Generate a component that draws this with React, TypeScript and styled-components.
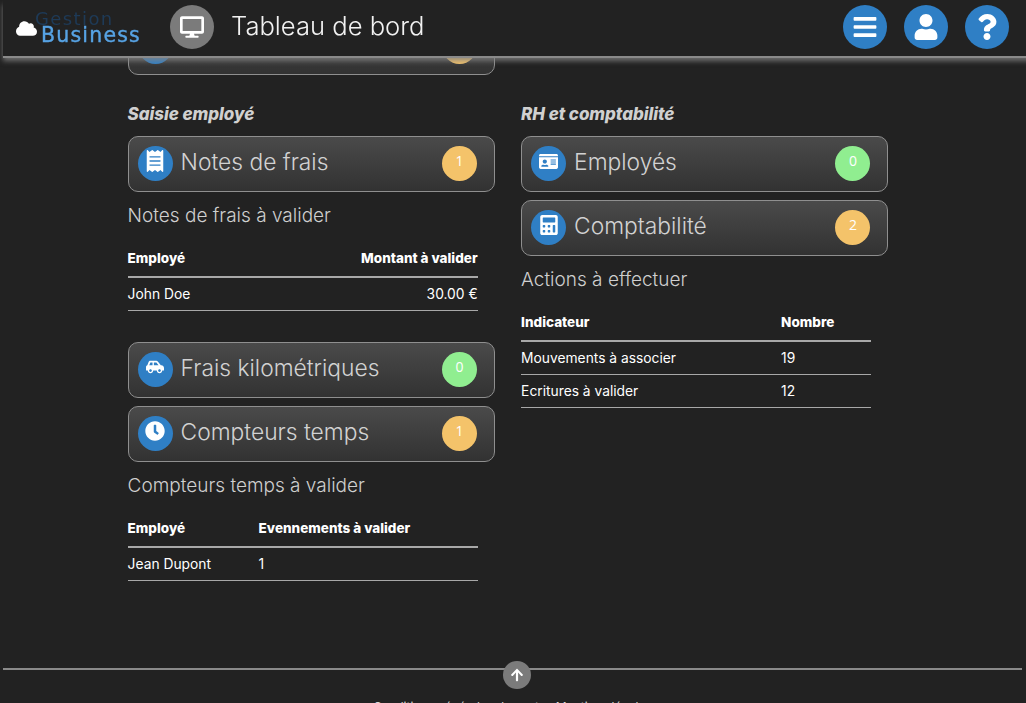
import styled, { createGlobalStyle } from "styled-components";
import {
  FaArrowUp,
  FaBars,
  FaCalculator,
  FaCarSide,
  FaClock,
  FaCloud,
  FaDesktop,
  FaIdCard,
  FaQuestion,
  FaReceipt,
  FaUser,
} from "react-icons/fa";
import type { ReactNode } from "react";

const font = `Inter, "Liberation Sans", sans-serif`;

const GlobalStyle = createGlobalStyle`
  html, body {
    margin: 0;
    height: 100%;
    background: #222222;
    overflow: hidden;
  }
  body {
    font-family: ${font};
    color: #fff;
  }
`;

const Page = styled.div`
  height: 703px;
  overflow: hidden;
`;

const Header = styled.header`
  position: fixed;
  top: 0;
  left: 3px;
  right: -10px;
  height: 56px;
  box-sizing: border-box;
  background: #222222;
  box-shadow: 0 2px 0 #8a8a8a, 0 5px 5px 0 rgba(130, 130, 130, 0.8);
  display: flex;
  align-items: center;
  padding: 0 27px 2px 13px;
  z-index: 10;
`;

const Logo = styled.div`
  width: 141px;
  height: 34px;
  position: relative;
  flex: none;
  svg {
    position: absolute;
    left: 0;
    top: 8px;
    color: #fff;
    font-size: 21px;
  }
`;

const LogoGestion = styled.span`
  position: absolute;
  left: 19px;
  top: 1px;
  font-family: "DejaVu Sans", sans-serif;
  font-size: 18px;
  line-height: 15px;
  letter-spacing: 1.4px;
  color: #1e3a57;
`;

const LogoBusiness = styled.span`
  position: absolute;
  left: 25px;
  top: 17px;
  font-family: "DejaVu Sans", sans-serif;
  font-size: 20.5px;
  line-height: 17px;
  letter-spacing: 1.2px;
  color: #57a3e4;
  -webkit-text-stroke: 0.4px #57a3e4;
`;

const PageIcon = styled.div`
  width: 44px;
  height: 44px;
  border-radius: 50%;
  background: #7b7b7b;
  margin-left: 13px;
  display: flex;
  align-items: center;
  justify-content: center;
  font-size: 24px;
  color: #fff;
  flex: none;
`;

const PageTitle = styled.h1`
  margin: 0 0 4px 17px;
  font-size: 25.6px;
  font-weight: 300;
  color: #f2f2f2;
  flex: 1;
`;

const HeaderButton = styled.div`
  width: 44px;
  height: 44px;
  border-radius: 50%;
  background: #2f7fc5;
  margin-left: 17px;
  display: flex;
  align-items: center;
  justify-content: center;
  font-size: 26px;
  color: #fff;
  flex: none;
`;

const Main = styled.main`
  padding: 19px 0 0 127.6px;
  height: 650px;
  box-sizing: border-box;
  display: grid;
  grid-template-columns: 393.5px 393.5px;
  grid-template-rows: auto 1fr;
  align-content: start;
`;

const FirstCardSlot = styled.div`
  grid-column: 1 / 3;
  width: 367.3px;
  margin-bottom: 29.5px;
`;

const Column = styled.section`
  display: flex;
  flex-direction: column;
  align-items: flex-start;
`;

const SectionLabel = styled.h2`
  margin: 0 0 12px;
  font-size: 17px;
  line-height: 20px;
  font-style: italic;
  font-weight: 800;
  letter-spacing: -0.05px;
  color: #d0d0d0;
`;

const Card = styled.div<{ $gap?: number }>`
  box-sizing: border-box;
  width: 367.3px;
  height: 55.5px;
  border: 1px solid #8f8f8f;
  border-radius: 10px;
  background: linear-gradient(#4a4a4a, #323232);
  display: flex;
  align-items: center;
  padding: 0 17px 0 9px;
  margin-bottom: ${(p) => p.$gap ?? 0}px;
  flex: none;
`;

const CardIcon = styled.div`
  width: 35px;
  height: 35px;
  border-radius: 50%;
  background: #2f7fc5;
  display: flex;
  align-items: center;
  justify-content: center;
  color: #fff;
  flex: none;

  svg {
    margin-bottom: 5px;
  }
`;

const CardLabel = styled.span`
  margin: 0 0 4px 8px;
  flex: 1;
  font-size: 22.8px;
  font-weight: 300;
  color: #d2d2d2;
  white-space: nowrap;
`;

const Badge = styled.div<{ $tone: "warn" | "ok" }>`
  width: 35px;
  height: 35px;
  border-radius: 50%;
  background: ${(p) => (p.$tone === "warn" ? "#f4c36a" : "#90ee90")};
  font-family: "Open Sans", sans-serif;
  font-size: 14px;
  line-height: 29px;
  text-align: center;
  color: #fff;
  flex: none;
`;

const SubTitle = styled.h3`
  margin: 12.5px 0 0;
  font-size: 19px;
  line-height: 24px;
  font-weight: 300;
  color: #cfcfcf;
`;

const Table = styled.table<{ $first: number; $after?: number }>`
  width: 350px;
  margin: 14.5px 0 ${(p) => p.$after ?? 0}px;
  border-collapse: collapse;
  table-layout: fixed;
  font-size: 13.8px;

  th,
  td {
    padding: 0;
    text-align: left;
  }
  th:first-child,
  td:first-child {
    width: ${(p) => p.$first}px;
  }
  th {
    height: 31px;
    font-weight: 800;
    font-size: 13.5px;
    vertical-align: middle;
    border-bottom: 2px solid #a8a8a8;
    padding-bottom: 2px;
  }
  td {
    height: 32px;
    border-bottom: 1px solid #a8a8a8;
  }
  .end {
    text-align: right;
  }
`;

const Footer = styled.footer`
  position: relative;
  margin: 18px 4px 0 3px;
  border-top: 2px solid #8a8a8a;
  padding-top: 27px;
  text-align: center;
  font-size: 12px;
  line-height: 20px;
  color: #d8d8d8;
`;

const FooterLink = styled.span`
  margin: 0 5px;
`;

const TopButton = styled.div`
  position: absolute;
  left: 500px;
  top: -9px;
  width: 28px;
  height: 28px;
  border-radius: 50%;
  background: #7b7b7b;
  display: flex;
  align-items: center;
  justify-content: center;
  font-size: 14px;
  color: #fff;
`;

type TileProps = {
  icon: ReactNode;
  label: string;
  count?: number;
  tone: "warn" | "ok";
  gap?: number;
};

const Tile = ({ icon, label, count, tone, gap }: TileProps) => (
  <Card $gap={gap}>
    <CardIcon>{icon}</CardIcon>
    <CardLabel>{label}</CardLabel>
    <Badge $tone={tone}>{count}</Badge>
  </Card>
);

const App = () => {
  return (
    <Page>
      <GlobalStyle />
      <Header>
        <Logo>
          <FaCloud />
          <LogoGestion>Gestion</LogoGestion>
          <LogoBusiness>Business</LogoBusiness>
        </Logo>
        <PageIcon>
          <FaDesktop />
        </PageIcon>
        <PageTitle>Tableau de bord</PageTitle>
        <HeaderButton>
          <FaBars />
        </HeaderButton>
        <HeaderButton>
          <FaUser />
        </HeaderButton>
        <HeaderButton>
          <FaQuestion />
        </HeaderButton>
      </Header>

      <Main>
        <FirstCardSlot>
          <Tile icon={<FaCarSide size={18} />} label="" tone="warn" />
        </FirstCardSlot>

        <Column>
          <SectionLabel>Saisie employé</SectionLabel>
          <Tile icon={<FaReceipt size={22} />} label="Notes de frais" count={1} tone="warn" />
          <SubTitle>Notes de frais à valider</SubTitle>
          <Table $first={175} $after={31.5}>
            <thead>
              <tr>
                <th>Employé</th>
                <th className="end">Montant à valider</th>
              </tr>
            </thead>
            <tbody>
              <tr>
                <td>John Doe</td>
                <td className="end">30.00 €</td>
              </tr>
            </tbody>
          </Table>
          <Tile icon={<FaCarSide size={18} />} label="Frais kilométriques" count={0} tone="ok" gap={8.5} />
          <Tile icon={<FaClock size={20} />} label="Compteurs temps" count={1} tone="warn" />
          <SubTitle>Compteurs temps à valider</SubTitle>
          <Table $first={131}>
            <thead>
              <tr>
                <th>Employé</th>
                <th>Evennements à valider</th>
              </tr>
            </thead>
            <tbody>
              <tr>
                <td>Jean Dupont</td>
                <td>1</td>
              </tr>
            </tbody>
          </Table>
        </Column>

        <Column>
          <SectionLabel>RH et comptabilité</SectionLabel>
          <Tile icon={<FaIdCard size={19} />} label="Employés" count={0} tone="ok" gap={8.5} />
          <Tile icon={<FaCalculator size={20} />} label="Comptabilité" count={2} tone="warn" />
          <SubTitle>Actions à effectuer</SubTitle>
          <Table $first={260}>
            <thead>
              <tr>
                <th>Indicateur</th>
                <th>Nombre</th>
              </tr>
            </thead>
            <tbody>
              <tr>
                <td>Mouvements à associer</td>
                <td>19</td>
              </tr>
              <tr>
                <td>Ecritures à valider</td>
                <td>12</td>
              </tr>
            </tbody>
          </Table>
        </Column>
      </Main>

      <Footer>
        <TopButton>
          <FaArrowUp />
        </TopButton>
        <FooterLink>Conditions générales de vente</FooterLink>
        <FooterLink>Mentions légales</FooterLink>
      </Footer>
    </Page>
  );
};

export default App;
